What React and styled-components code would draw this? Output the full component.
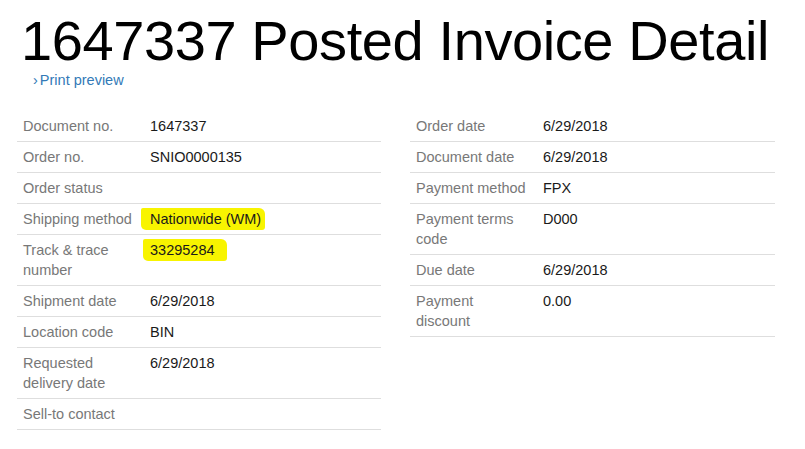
import React from 'react';
import styled, { createGlobalStyle } from 'styled-components';

const GlobalStyle = createGlobalStyle`
body {
    margin: 0;
    background: #fff;
    font-family: "Liberation Sans", Arial, sans-serif;
}
`;

const Page = styled.div`
padding: 13px 17px 0;
`;

const Title = styled.h1`
margin: 0 0 0 4px;
font-size: 56px;
letter-spacing: -0.4px;
font-weight: normal;
line-height: 56px;
color: #000;
white-space: nowrap;
`;

const PrintLink = styled.a`
display: inline-block;
margin: 1px 0 0 16px;
font-size: 14.5px;
line-height: 20px;
color: #337ab7;
text-decoration: none;
&::before {
    content: '›';
    margin-right: 2px;
}
`;

const Columns = styled.div`
display: grid;
grid-template-columns: 364px 365px;
column-gap: 29px;
align-items: start;
margin-top: 21px;
`;

const Table = styled.div`
display: grid;
grid-template-columns: 127px 1fr;
`;

const Cell = styled.div`
padding: 5px 6px 5px;
font-size: 14.5px;
line-height: 20px;
border-bottom: 1px solid #dedede;
color: ${(p) => (p.$label ? '#787878' : '#1a1a1a')};
`;

const Marker = styled.span`
background: #f8f400;
padding: 3px ${(p) => p.$right || 4}px 3px ${(p) => p.$left || 4}px;
margin-left: ${(p) => -(p.$left || 4)}px;
border-radius: 2px 6px 3px 5px;
`;

const left = [
    ['Document no.', '1647337'],
    ['Order no.', 'SNIO0000135'],
    ['Order status', ''],
    ['Shipping method', <Marker $left={9}>Nationwide (WM)</Marker>],
    ['Track & trace number', <Marker $left={7} $right={12}>33295284</Marker>],
    ['Shipment date', '6/29/2018'],
    ['Location code', 'BIN'],
    ['Requested delivery date', '6/29/2018'],
    ['Sell-to contact', ''],
];

const right = [
    ['Order date', '6/29/2018'],
    ['Document date', '6/29/2018'],
    ['Payment method', 'FPX'],
    ['Payment terms code', 'D000'],
    ['Due date', '6/29/2018'],
    ['Payment discount', '0.00'],
];

function DetailTable({ rows }) {
    return (
        <Table>
            {rows.map(([label, value]) => (
                <React.Fragment key={label}>
                    <Cell $label>{label}</Cell>
                    <Cell>{value}</Cell>
                </React.Fragment>
            ))}
        </Table>
    );
}

export default function App() {
    return (
        <Page>
            <GlobalStyle />
            <Title>1647337 Posted Invoice Detail</Title>
            <PrintLink href="#">Print preview</PrintLink>
            <Columns>
                <DetailTable rows={left} />
                <DetailTable rows={right} />
            </Columns>
        </Page>
    );
}
